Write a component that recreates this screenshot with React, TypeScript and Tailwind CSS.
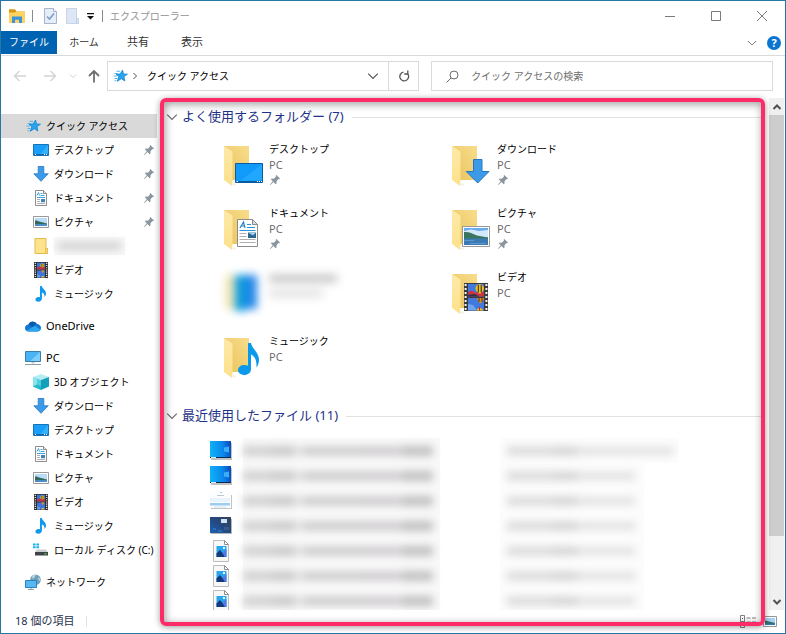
import React from "react";

type IconProps = { className?: string };

const FolderSmall = ({ className }: IconProps) => (
  <svg viewBox="0 0 16 16" className={className}>
    <path d="M2 0.5h11v10h1.5v5H2z" fill="#fde38c" stroke="#e3bc4d" />
    <path d="M12.5 15.5v-5h2v5z" fill="#f9d978" stroke="#e3bc4d" strokeWidth="0.8" />
  </svg>
);

const ExplorerIcon = ({ className }: IconProps) => (
  <svg viewBox="0 0 16 14" className={className}>
    <path d="M0 0.5h6l1.5 2H16V13.5H0z" fill="#e0a21c" />
    <path d="M0 3h16v10.5H0z" fill="#fdd35e" />
    <path d="M0 0.5h6l1 1.5-1 1.5H0z" fill="#d9960f" />
    <path d="M3 14V7.5h10V14h-3v-3.2H6V14z" fill="#3b93dc" />
  </svg>
);

const StarIcon = ({ className }: IconProps) => (
  <svg viewBox="0 0 16 16" className={className}>
    <path d="M10.500 2l1 3.900 4 .3-3.500 2.400.8 4.400-3.500-2.300-4 2.600 1.500-4.500-2.800-2.700 4.200-.1z" fill="#2ba3ec" stroke="#1488d2" strokeWidth="0.8" />
    <path d="M4.500 3.300h3.500M2.500 5.500h3.300M1.500 8h3.500M2.500 10.500h3M2.500 12.800h2" stroke="#4aaceb" strokeWidth="0.9" />
  </svg>
);

const DesktopIcon = ({ className }: IconProps) => (
  <svg viewBox="0 0 16 16" className={className}>
    <path d="M0.5 2.5h15v11h-15z" fill="#1a9ff8" stroke="#1773b8" />
    <path d="M15 3v8L7 13z" fill="#36b1fc" />
    <path d="M1 12.5h14" stroke="#1268a8" />
    <path d="M2 12.5h1M11 12.5h1M13 12.5h1" stroke="#fff" />
  </svg>
);

const DownloadIcon = ({ className }: IconProps) => (
  <svg viewBox="0 0 16 16" className={className}>
    <path d="M5.2 0.5h5.6v7.3h4.4L8 15.3 0.8 7.8h4.4z" fill="#3c9be8" stroke="#2479c2" strokeWidth="0.8" />
  </svg>
);

const DocumentIcon = ({ className }: IconProps) => (
  <svg viewBox="0 0 16 16" className={className}>
    <path d="M2.5 0.5h8l3 3v12h-11z" fill="#fff" stroke="#8d8d8d" />
    <path d="M10.5 0.5v3h3" fill="#e3e3e3" stroke="#8d8d8d" />
    <path d="M4 5.500l1.500-3 1 3M7.500 3.500h2M7.500 5.500h4M4 7.500h8" stroke="#3fa0de" strokeWidth="1" fill="none" />
    <path d="M4 9.500h3M4 11.500h3M4 13.500h8" stroke="#a5a5a5" strokeWidth="0.9" />
    <path d="M8 9h4v3.2H8z" fill="#3d83b4" />
  </svg>
);

const PictureIcon = ({ className }: IconProps) => (
  <svg viewBox="0 0 16 16" className={className}>
    <path d="M0.500 2.500h15v11h-15z" fill="#fff" stroke="#999" />
    <path d="M2 4h12v8H2z" fill="#b9dcf8" />
    <path d="M2 6.500c3 0 6 2 12 3v1H2z" fill="#33685c" />
    <path d="M2 10h12v2H2z" fill="#4a8cc4" />
  </svg>
);

const VideoIcon = ({ className }: IconProps) => (
  <svg viewBox="0 0 16 16" className={className}>
    <path d="M1 0h14v16H1z" fill="#303030" />
    <path d="M2.300 0.800v15M13.700 0.800v15" stroke="#eee" strokeWidth="1.200" strokeDasharray="1.100 1.100" />
    <path d="M4 0.800h8v6.800H4zM4 8.400h8v7H4z" fill="#3f74dc" />
    <path d="M4 5.500l2.500-1 2 1 3.500-.6v2.700H4z" fill="#c4303e" />
    <circle cx="9.300" cy="3.600" r="2" fill="#f4bf1c" />
    <path d="M8.600 2v3.200M10 2v3.200" stroke="#222" strokeWidth="0.500" />
    <path d="M8 8.600h3.400l-1.600 2.300z" fill="#e59a1a" />
    <path d="M4 12l3 1.200v2.200H4z" fill="#5f9bea" />
    <path d="M8 15.400a1.900 1.900 0 0 1 3.600 0z" fill="#f2c01c" />
  </svg>
);

const MusicIcon = ({ className }: IconProps) => (
  <svg viewBox="0 0 16 16" className={className}>
    <path d="M7 0h1.800c.3 2.600 4.200 4 4.200 7.300 0 1.600-.7 2.900-1.600 3.800.5-2.600-.6-4.200-2.500-4.700v6.200c0 2-1.600 3.200-3.600 3.200-1.800 0-2.900-.9-2.900-2.200 0-1.700 1.500-2.700 3.300-2.700.5 0 .9.100 1.300.2z" fill="#0d99ee" />
  </svg>
);

const CloudIcon = ({ className }: IconProps) => (
  <svg viewBox="0 0 16 16" className={className}>
    <path d="M3.500 6.500A4.600 4.600 0 0 1 12 6c2 .2 4 1.600 4 3.900 0 2.200-1.600 3.600-3.600 3.600H3.700C1.500 13.500 0 12 0 10s1.500-3.400 3.500-3.500z" fill="#0f78d4" />
    <path d="M3.500 6.500A4.600 4.600 0 0 1 11.500 5.600L7.500 9z" fill="#0a58a8" />
    <path d="M1.500 12.800L10 7.800l5.500 4A3.600 3.600 0 0 1 12.400 13.500H3.700c-.9 0-1.600-.3-2.200-.7z" fill="#2ba6ee" />
  </svg>
);

const PcIcon = ({ className }: IconProps) => (
  <svg viewBox="0 0 16 16" className={className}>
    <path d="M0.500 1.500h15v10h-15z" fill="#49b3f5" stroke="#3b7ea8" />
    <path d="M15 2v9L5 11z" fill="#7ccdfb" />
    <path d="M6.500 12h3v1.500h-3z" fill="#c5cdd3" />
    <path d="M0 14.500h16" stroke="#8da0ae" />
  </svg>
);

const CubeIcon = ({ className }: IconProps) => (
  <svg viewBox="0 0 16 16" className={className}>
    <path d="M0 3l8-3 8 3-8 3z" fill="#b4eef3" />
    <path d="M0 3l8 3v10l-8-3.500z" fill="#4fd0dc" />
    <path d="M16 3L8 6v10l8-3.500z" fill="#13a0b8" />
    <path d="M0 3l4 1.500v6L0 12.500z" fill="#8be3ea" />
    <path d="M0 12.500l4-2 4 1.500v4z" fill="#2ab8cc" />
  </svg>
);

const DriveIcon = ({ className }: IconProps) => (
  <svg viewBox="0 0 16 16" className={className}>
    <path d="M0 1.500h2.600v2H0zM3.400 1.500H6v2H3.400zM0 4.300h2.600v2H0zM3.400 4.300H6v2H3.400z" fill="#18b2ee" />
    <path d="M3.500 7.500h9.500l2 3H2z" fill="#c9cdd0" />
    <path d="M2 10h13v3.500H2z" fill="#3e4347" />
    <path d="M11.500 11.800h2" stroke="#52e352" strokeWidth="1.200" />
  </svg>
);

const NetworkIcon = ({ className }: IconProps) => (
  <svg viewBox="0 0 16 16" className={className}>
    <circle cx="10.500" cy="5.800" r="5.300" fill="#6f9fba" />
    <path d="M7 2.500c1.500-1.500 3-1.600 4-1.200L9.500 3.500 7.500 5zM13 3l2 1.500.3 2.500-1.800-1z" fill="#b7d4de" />
    <path d="M0.500 6.500h11v7H.5z" fill="#54b9f4" stroke="#2c82b9" />
    <path d="M3 15.500h6M6 14v1.500" stroke="#8ca1af" />
  </svg>
);

const PinIcon = ({ className }: IconProps) => (
  <svg viewBox="0 0 10 10" className={className}>
    <path d="M6.300 0l3.700 3.500-.8.700-.7-.1-2 2.200.1 2-.9.900L3.500 7 .4 9.900 0 9.600 2.800 6.300.8 4.300l.9-.8 2.100.2L6 1.500 5.700.6z" fill="#8a969f" />
  </svg>
);

const Chevron = ({ className, d = "M1 3l4 4 4-4" }: IconProps & { d?: string }) => (
  <svg viewBox="0 0 10 10" className={className} fill="none" stroke="currentColor">
    <path d={d} />
  </svg>
);

const FolderTile = ({ children }: { children: React.ReactNode }) => (
  <svg viewBox="0 0 44 44" className="mt-[2px] h-11 w-11 shrink-0">
    <defs>
      <linearGradient id="folderBack" x1="1" y1="0" x2="0" y2="1">
        <stop offset="0" stopColor="#f8dd8b" />
        <stop offset="1" stopColor="#e9c25c" />
      </linearGradient>
      <linearGradient id="folderFlap" x1="0" y1="0" x2="0" y2="1">
        <stop offset="0" stopColor="#fde9a8" />
        <stop offset="1" stopColor="#fde18b" />
      </linearGradient>
    </defs>
    <path d="M10 42.500l4-.5-2-2z" fill="#000" opacity="0.080" />
    <path d="M2 3h25v34H9z" fill="url(#folderBack)" />
    <path d="M2 3l8.500 5.500v28L10 43l-8-6z" fill="url(#folderFlap)" />
    {children}
  </svg>
);

const desktopArt = (
  <>
    <path d="M13.500 20.500h27v19h-27z" fill="#109bfb" stroke="#0b5c9c" />
    <path d="M40 21v16L18 38z" fill="#2bacff" opacity="0.700" />
    <path d="M14 38.500h26" stroke="#075e9f" />
    <path d="M14.500 38.500h1.500M35 38.500h1M37 38.500h1M39 38.500h1" stroke="#fff" />
  </>
);
const downloadArt = (
  <path d="M23.500 16.500h8.500v12h7L27.700 40 16.200 28.500h7.300z" fill="#3c9ae8" stroke="#2279c3" />
);
const documentArt = (
  <>
    <path d="M15.500 12.500h15l5 5v22h-20z" fill="#fff" stroke="#8b8b8b" />
    <path d="M30.500 12.500v5h5z" fill="#dcdcdc" stroke="#8b8b8b" />
    <path d="M18 21l3.500-6 1.500 6M19.500 19h3" fill="none" stroke="#1f83c6" strokeWidth="1.200" />
    <path d="M25 17.500h4M25 20.500h8M17.500 23.500h16" stroke="#2a93d6" />
    <path d="M17.500 26.500h7M17.500 29.500h7M17.500 32.500h16M17.500 35.500h16" stroke="#b0b0b0" />
    <path d="M26 25.500h8v5.500h-8z" fill="#2b6591" />
    <path d="M26 25.500h8l-3 3z" fill="#a8d0ea" />
  </>
);
const pictureArt = (
  <>
    <path d="M12.500 19.500h27v20h-27z" fill="#fff" stroke="#999" />
    <path d="M14 21h24v10H14z" fill="#68abf0" />
    <path d="M14 24l7-1.500 8 1.500 9-1v7H14z" fill="#d3e9fb" />
    <path d="M14 25c5-.5 8 1.500 13 3.500 4 1 7 1 11 2v1.500H14z" fill="#3a7560" />
    <path d="M14 31.500h24V38H14z" fill="#3c7ab5" />
    <path d="M14 33.500h10M20 36.500h16" stroke="#6ba3d4" strokeWidth="0.700" />
  </>
);
const videoArt = (
  <>
    <path d="M14 12h24v28H14" fill="#3a3a3a" />
    <path d="M15.600 13v27M36.400 13v27" stroke="#f4f4f4" strokeWidth="2" strokeDasharray="2 2" />
    <path d="M18 13h16v12.500H18zM18 27h16v12.500H18z" fill="#4179df" />
    <path d="M18 21l4-1.500 3 2 9-1v5H18z" fill="#cb3345" />
    <path d="M18 24l7-1 4 2.500H18z" fill="#2a3350" />
    <path d="M25.500 17.500a4.200 4.200 0 0 1 8.400 0c0 2-2 3.500-3 5h-2.400c-1-1.500-3-3-3-5z" fill="#f5c21a" />
    <path d="M28.300 14v7.500M31.200 14v7.500" stroke="#222" />
    <path d="M26.500 27h8l-3 5h-2z" fill="#e68b1c" />
    <path d="M29 27v4M32 27v4" stroke="#432" />
    <path d="M18 33l5 1 3 4v1.500h-8z" fill="#6ea5ee" />
    <path d="M26 39.500a4 4 0 0 1 7.500 0z" fill="#f5c21a" />
    <path d="M29.500 36v3.500" stroke="#c22" />
  </>
);
const musicArt = (
  <path d="M26 8h3c.8 5.500 8 9.500 8 16.500 0 3.500-1 6-2.500 8 .3-6.500-1.500-11.500-5.500-13V34c0 3.600-3 6-6.800 6-3.700 0-6.200-2-6.200-4.900 0-3 2.800-5.100 6.500-5.100 1.300 0 2.500.3 3.500.7z" fill="#0b99ee" />
);

type TreeNode = { label?: string; Icon: React.FC<IconProps>; pinned?: boolean };

const quickItems: TreeNode[] = [
  { label: "デスクトップ", Icon: DesktopIcon, pinned: true },
  { label: "ダウンロード", Icon: DownloadIcon, pinned: true },
  { label: "ドキュメント", Icon: DocumentIcon, pinned: true },
  { label: "ピクチャ", Icon: PictureIcon, pinned: true },
  { Icon: FolderSmall },
  { label: "ビデオ", Icon: VideoIcon },
  { label: "ミュージック", Icon: MusicIcon },
];

const pcItems: TreeNode[] = [
  { label: "3D オブジェクト", Icon: CubeIcon },
  { label: "ダウンロード", Icon: DownloadIcon },
  { label: "デスクトップ", Icon: DesktopIcon },
  { label: "ドキュメント", Icon: DocumentIcon },
  { label: "ピクチャ", Icon: PictureIcon },
  { label: "ビデオ", Icon: VideoIcon },
  { label: "ミュージック", Icon: MusicIcon },
  { label: "ローカル ディスク (C:)", Icon: DriveIcon },
];

function TreeItem({ label, Icon, pinned }: TreeNode) {
  return (
    <li>
      <button className="flex h-6 w-full items-center gap-[5px] pl-8 pr-[3px] text-left">
        <Icon className="h-4 w-4 shrink-0" />
        {label ? (
          <span className="whitespace-nowrap">{label}</span>
        ) : (
          <span className="flex h-[18px] w-[71px] items-center bg-[#f8f8f8] px-1">
            <span className="h-[6px] w-full bg-[#c4c4c4] blur-[4px]" />
          </span>
        )}
        {pinned && <PinIcon className="ml-auto h-[10px] w-[10px]" />}
      </button>
    </li>
  );
}

function TreeRoot({ label, Icon, latin, selected }: TreeNode & { latin?: boolean; selected?: boolean }) {
  return (
    <button
      className={`flex h-6 w-full items-center gap-[5px] pl-6 text-left ${selected ? "bg-[#d9d9d9]" : ""} ${latin ? "text-[11px]" : ""}`}
    >
      <Icon className="h-4 w-4 shrink-0" />
      <span>{label}</span>
    </button>
  );
}

const folders = [
  { label: "デスクトップ", art: desktopArt, pinned: true },
  { label: "ダウンロード", art: downloadArt, pinned: true },
  { label: "ドキュメント", art: documentArt, pinned: true },
  { label: "ピクチャ", art: pictureArt, pinned: true },
  { label: "", art: null, pinned: false },
  { label: "ビデオ", art: videoArt, pinned: false },
  { label: "ミュージック", art: musicArt, pinned: false },
];

function Heading({ children }: { children: React.ReactNode }) {
  return (
    <h2 className="flex h-6 items-center gap-1 pl-2 text-[13px] text-[#1e3287]">
      <Chevron className="h-3 w-3 text-[#6c6c6c]" />
      <span className="whitespace-nowrap">{children}</span>
      <span className="ml-1 h-px flex-1 bg-[#e2e2e2]" />
    </h2>
  );
}

const WallpaperThumb = () => (
  <svg viewBox="0 0 22 19" className="h-[19px] w-[22px]">
    <defs>
      <linearGradient id="wallpaper" x1="0" y1="0.300" x2="1" y2="0.200">
        <stop offset="0" stopColor="#0fb0f8" />
        <stop offset="0.600" stopColor="#0a86ea" />
        <stop offset="1" stopColor="#0a48b8" />
      </linearGradient>
    </defs>
    <path d="M1 2h21v17H1z" fill="#999" opacity="0.600" />
    <path d="M0 0h21v17H0z" fill="url(#wallpaper)" />
    <path d="M14 6.500l5-1v6l-5-1z" fill="#3cadf8" />
    <path d="M0 16.500h21" stroke="#0a2a50" />
    <path d="M1 16.500h5" stroke="#dfe8f0" />
  </svg>
);
const PageThumb = () => (
  <svg viewBox="0 0 22 19" className="h-[19px] w-[22px]">
    <path d="M1 4h21v14H1z" fill="#aaa" opacity="0.700" />
    <path d="M0 2h21v15H0z" fill="#fbfdff" />
    <path d="M7 4.500h7" stroke="#c3cbd2" />
    <path d="M10 1.500h2" stroke="#8dc9f0" />
    <path d="M0 7h20v4H0z" fill="#e9f3fb" />
    <path d="M0 12h20v2.500H0z" fill="#9ccdf0" />
    <path d="M4 16h12" stroke="#cfe4f4" />
  </svg>
);
const DarkThumb = () => (
  <svg viewBox="0 0 22 19" className="h-[19px] w-[22px]">
    <defs>
      <linearGradient id="darkScene" x1="0" y1="1" x2="1" y2="0">
        <stop offset="0" stopColor="#1c62b8" />
        <stop offset="0.500" stopColor="#24487f" />
        <stop offset="1" stopColor="#33435c" />
      </linearGradient>
    </defs>
    <path d="M1 3h21v15H1z" fill="#999" opacity="0.700" />
    <path d="M0 1h21v16H0z" fill="url(#darkScene)" />
    <path d="M11 3h6v4h-6z" fill="#cfe2f4" />
    <path d="M14 11h5v3h-5z" fill="#3c5a88" />
    <path d="M3 13h3M8 15h4" stroke="#3e7fd0" />
  </svg>
);
const ImageFileThumb = () => (
  <svg viewBox="0 0 22 22" className="h-[22px] w-[22px]">
    <path d="M3.500 0.500h11l4 4v17h-15z" fill="#f8f8f8" stroke="#bdbdbd" />
    <path d="M14.500 0.500v4h4z" fill="#fff" stroke="#8f8f8f" />
    <path d="M6.500 6h10v11h-10z" fill="#29a6ee" />
    <path d="M13 7h2v2h-2z" fill="#e6f5ff" />
    <path d="M6.500 13.500l3.500-3.500 3.500 4 1.500 3h-8.500z" fill="#153a7b" />
    <path d="M12.500 13l4-4v8H15z" fill="#4f7ae6" />
  </svg>
);

const files = [WallpaperThumb, WallpaperThumb, PageThumb, DarkThumb, ImageFileThumb, ImageFileThumb, ImageFileThumb];

function RedactedPath({ wide }: { wide?: boolean }) {
  return (
    <span className="flex h-2 items-center blur-[4px]">
      <span className="h-full w-[46px] bg-[#d6d6d6]" />
      <span className="h-full w-6 bg-[#cfcfcf]" />
      <span className={`h-[6px] bg-[#d9d9d9] ${wide ? "w-24" : "w-[58px]"}`} />
    </span>
  );
}

function RedactedName() {
  return (
    <span className="flex h-[10px] w-[190px] items-center blur-[4px]">
      <span className="h-full w-7 bg-[#cfcfcf]" />
      <span className="h-full w-6 bg-[#c8c8c8]" />
      <span className="h-2 w-2 bg-[#e0e0e0]" />
      <span className="h-2 w-[60px] bg-[#c6c6c6]" />
      <span className="h-2 w-10 bg-[#c8c4c8]" />
      <span className="h-full w-[30px] bg-[#bfbfbf]" />
    </span>
  );
}

export default function App() {
  return (
    <div className="flex h-screen flex-col overflow-hidden border border-[#2478a6] bg-white font-['Noto_Sans','Noto_Sans_CJK_JP',sans-serif] text-[11px] text-black">
      <header className="shrink-0">
        <div className="flex h-[30px] items-center pl-2">
          <ExplorerIcon className="h-[14px] w-4" />
          <span className="ml-[7px] h-3 w-px bg-[#8a8a8a]" />
          <button aria-label="プロパティ" className="ml-[11px]">
            <svg viewBox="0 0 13 16" className="h-4 w-[13px]">
              <path d="M0.500 0.500h9l3 3v12h-12z" fill="#e4edf8" stroke="#a6b5cb" />
              <path d="M9.500 0.500v3h3" fill="#fff" stroke="#a6b5cb" />
              <path d="M3 8.500l2.500 2.500L10 5.500" fill="none" stroke="#7d9cc6" strokeWidth="1.600" />
            </svg>
          </button>
          <button aria-label="新しいフォルダー" className="ml-[9px]">
            <svg viewBox="0 0 13 16" className="h-4 w-[13px]">
              <path d="M0.500 0.500h10v10h2v5h-12z" fill="#dde6f4" stroke="#c6d3e8" />
              <path d="M10.500 10.500v5" stroke="#bccbe2" />
            </svg>
          </button>
          <button aria-label="クイック アクセス ツール バーのユーザー設定" className="ml-2">
            <svg viewBox="0 0 7 7" className="h-[7px] w-[7px]">
              <path d="M0 0h7v1.200H0zM0 3h7L3.500 6.500z" fill="#111" />
            </svg>
          </button>
          <span className="ml-2 h-3 w-px bg-[#8a8a8a]" />
          <h1 className="ml-[7px] text-[10px] text-[#949494]">エクスプローラー</h1>
          <div className="ml-auto flex h-full text-[#7a7a7a]">
            <button aria-label="最小化" className="flex w-[46px] items-center justify-center">
              <Chevron className="h-[10px] w-[10px]" d="M0 5.500h10" />
            </button>
            <button aria-label="最大化" className="flex w-[46px] items-center justify-center">
              <Chevron className="h-[10px] w-[10px]" d="M0.500 0.500h9v9h-9z" />
            </button>
            <button aria-label="閉じる" className="flex w-[46px] items-center justify-center">
              <Chevron className="h-[10px] w-[10px]" d="M0 0l10 10M10 0L0 10" />
            </button>
          </div>
        </div>

        <div className="flex h-[25px] items-start border-b border-[#dadbdc] text-[#333]">
          <button className="h-[23px] w-14 bg-[#0063b1] text-[10px] text-white">ファイル</button>
          <button className="h-[23px] w-[54px] text-[10px]">ホーム</button>
          <button className="h-[23px] w-[54px]">共有</button>
          <button className="h-[23px] w-[54px]">表示</button>
          <div className="ml-auto flex h-[23px] items-center gap-[10px] pr-1">
            <button aria-label="リボンの展開">
              <Chevron className="h-[10px] w-[10px] text-[#808080]" />
            </button>
            <button aria-label="ヘルプ" className="flex h-[14px] w-[14px] items-center justify-center rounded-full bg-[#0a74d1] text-[11px] leading-none font-bold text-white">
              ?
            </button>
          </div>
        </div>

        <div className="flex h-10 items-center pr-3 pl-3">
          <button aria-label="戻る" className="text-[#d3d3d3]">
            <svg viewBox="0 0 14 14" className="h-[14px] w-[14px]" fill="none" stroke="currentColor" strokeWidth="1.400">
              <path d="M13 7H2M6.500 2L1.500 7l5 5" />
            </svg>
          </button>
          <button aria-label="進む" className="ml-4 text-[#d3d3d3]">
            <svg viewBox="0 0 14 14" className="h-[14px] w-[14px]" fill="none" stroke="currentColor" strokeWidth="1.400">
              <path d="M1 7h11M7.500 2l5 5-5 5" />
            </svg>
          </button>
          <button aria-label="最近表示した場所" className="ml-3 text-[#c6c6c6]">
            <Chevron className="h-2 w-2" />
          </button>
          <button aria-label="上へ" className="ml-[10px] text-[#6e6e6e]">
            <svg viewBox="0 0 14 14" className="h-[14px] w-[14px]" fill="none" stroke="currentColor" strokeWidth="1.800">
              <path d="M7 13.500V2M2 7l5-5 5 5" />
            </svg>
          </button>
          <nav aria-label="アドレス" className="ml-[6px] flex h-[30px] flex-[31] items-center border border-[#d9d9d9] pl-1">
            <StarIcon className="h-4 w-4" />
            <Chevron className="ml-[2px] h-[10px] w-[10px] text-[#555]" d="M3.500 2l3 3-3 3" />
            <button className="ml-[7px] text-[10px]">クイック アクセス</button>
            <button aria-label="以前の場所" className="mr-[9px] ml-auto text-[#555]">
              <Chevron className="h-3 w-3" />
            </button>
            <button aria-label="最新の情報に更新" className="flex h-full w-[30px] items-center justify-center border-l border-[#d9d9d9] text-[#555]">
              <svg viewBox="0 0 12 12" className="h-3 w-3" fill="none" stroke="currentColor" strokeWidth="1.300">
                <path d="M9.500 3.600A4.400 4.400 0 1 1 5.500 2.200" />
                <path d="M9.800 0.500v3.500H6.300" />
              </svg>
            </button>
          </nav>
          <label className="ml-3 flex h-[30px] flex-[33] items-center border border-[#d9d9d9] pl-[14px]">
            <svg viewBox="0 0 13 13" className="h-[13px] w-[13px] text-[#6d6d6d]" fill="none" stroke="currentColor">
              <circle cx="8" cy="5" r="4" />
              <path d="M5 8L0.500 12.500" />
            </svg>
            <input
              type="search"
              aria-label="検索"
              placeholder="クイック アクセスの検索"
              className="ml-3 min-w-0 flex-1 text-[10px] outline-none placeholder:text-[#6d6d6d]"
            />
          </label>
        </div>
      </header>

      <div className="relative mt-[2px] flex min-h-0 flex-1 flex-col">
        <div className="flex min-h-0 flex-1">
          <nav aria-label="ナビゲーション" className="w-[156px] shrink-0 overflow-hidden pt-4 text-[10px]">
            <TreeRoot label="クイック アクセス" Icon={StarIcon} selected />
            <ul>
              {quickItems.map((item, i) => (
                <TreeItem key={i} {...item} />
              ))}
            </ul>
            <div className="mt-2"><TreeRoot label="OneDrive" Icon={CloudIcon} latin /></div>
            <div className="mt-2"><TreeRoot label="PC" Icon={PcIcon} latin /></div>
            <ul>
              {pcItems.map((item) => (
                <TreeItem key={item.label} {...item} />
              ))}
            </ul>
            <div className="mt-2"><TreeRoot label="ネットワーク" Icon={NetworkIcon} /></div>
          </nav>

          <main className="min-w-0 flex-1 overflow-hidden pt-[7px] pr-2 pl-px">
            <Heading>よく使用するフォルダー (7)</Heading>
            <ul className="mt-3 grid grid-cols-[repeat(auto-fill,228px)] pl-16">
              {folders.map(({ label, art, pinned }, i) => (
                <li key={i} className="h-16">
                  {label ? (
                    <button className="flex items-start gap-[3px] text-left">
                      <FolderTile>{art}</FolderTile>
                      <span className="flex flex-col leading-4">
                        <span className="text-[10px]">{label}</span>
                        <span className="text-[11px] text-[#6d6d6d]">PC</span>
                        {pinned && <PinIcon className="mt-[2px] ml-px h-[10px] w-[10px]" />}
                      </span>
                    </button>
                  ) : (
                    <div className="flex gap-3 pt-[6px] pl-[3px]">
                      <span className="flex blur-[4px]">
                        <span className="h-[34px] w-[10px] bg-[#f1e6b4]" />
                        <span className="h-[36px] w-[11px] bg-[#0b9be0]" />
                        <span className="h-[34px] w-[11px] bg-[#2385e8]" />
                      </span>
                      <span className="flex flex-col gap-2 blur-[5px]">
                        <span className="h-[7px] w-[68px] bg-[#bcbcbc]" />
                        <span className="h-[7px] w-[54px] bg-[#dedede]" />
                      </span>
                    </div>
                  )}
                </li>
              ))}
            </ul>
            <div className="mt-[7px]">
              <Heading>最近使用したファイル (11)</Heading>
            </div>
            <ul className="mt-[10px] pl-[52px]">
              {files.map((Thumb, i) => (
                <li key={i} className="flex h-[25px] items-center">
                  <Thumb />
                  <span className="ml-[11px] flex h-full w-[197px] items-center bg-[#f9f9f9]">
                    <RedactedName />
                  </span>
                  <span className={`ml-[60px] flex h-full items-center bg-[#fcfcfc] pl-[7px] ${i === 0 ? "w-[178px]" : "w-[144px]"}`}>
                    <RedactedPath wide={i === 0} />
                  </span>
                </li>
              ))}
            </ul>
          </main>

          <div className="mr-px flex w-[15px] shrink-0 flex-col bg-[#f0f0f0] text-[#505050]">
            <button aria-label="上へスクロール" className="flex h-[17px] items-center justify-center">
              <svg viewBox="0 0 10 10" className="h-[10px] w-[10px]" fill="none" stroke="currentColor" strokeWidth="2">
                <path d="M1.500 7L5 3.500 8.500 7" />
              </svg>
            </button>
            <div className="flex-1">
              <div className="h-[88%] bg-[#cdcdcd]" />
            </div>
            <button aria-label="下へスクロール" className="flex h-[17px] items-center justify-center">
              <svg viewBox="0 0 10 10" className="h-[10px] w-[10px]" fill="none" stroke="currentColor" strokeWidth="2">
                <path d="M1.500 3L5 6.500 8.500 3" />
              </svg>
            </button>
          </div>
        </div>

        <footer className="flex h-[23px] shrink-0 items-center pr-2 pl-[14px] text-[#1f3350]">
          <span>18 個の項目</span>
          <span className="ml-3 h-[11px] w-px bg-[#e2e2e2]" />
          <div className="ml-auto flex items-center gap-[6px]">
            <button aria-label="詳細">
              <svg viewBox="0 0 17 13" className="h-[13px] w-[17px]" fill="none" stroke="#808080">
                <path d="M0.500 0.500h4v12h-4zM0.500 6.500h4M6.500 3h4M12 3h4M6.500 7h4M12 7h4" />
                <path d="M2 3.500h1" stroke="#555" />
                <path d="M2 9.500h1" stroke="#3579dd" />
              </svg>
            </button>
            <button aria-label="大アイコン">
              <svg viewBox="0 0 14 11" className="h-[11px] w-[14px]">
                <path d="M0.500 0.500h13v10H.5z" fill="#fff" stroke="#979797" />
                <path d="M2 2h10v7H2z" fill="#a6d0f4" />
                <path d="M2 4.500l10 2.500v1H2z" fill="#2f6d5d" />
                <path d="M2 7.500h10V9H2z" fill="#3579b6" />
              </svg>
            </button>
          </div>
        </footer>

        <div className="pointer-events-none absolute top-0 right-5 bottom-[7px] left-[159px] rounded-md border-4 border-[#fd2c69] shadow-[0_1px_6px_rgba(0,0,0,0.4),inset_1px_2px_8px_rgba(0,0,0,0.4)]" />
      </div>
    </div>
  );
}
